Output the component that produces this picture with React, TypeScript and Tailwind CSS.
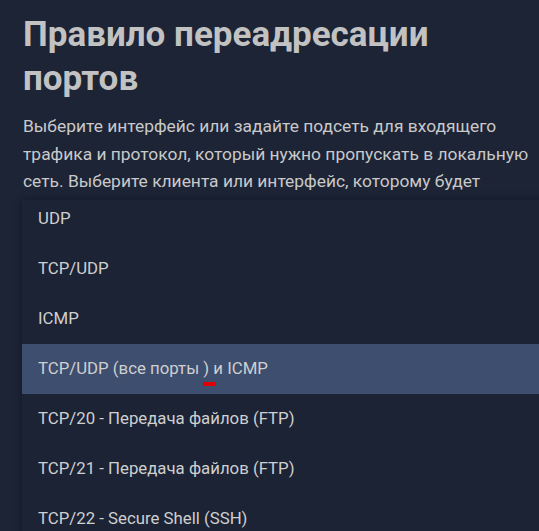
const options = [
    "UDP",
    "TCP/UDP",
    "ICMP",
    "TCP/UDP (все порты ) и ICMP",
    "TCP/20 - Передача файлов (FTP)",
    "TCP/21 - Передача файлов (FTP)",
    "TCP/22 - Secure Shell (SSH)",
    "TCP/23 - Telnet",
];

export default function App() {
    return (
        <div className="relative h-[531px] w-[539px] overflow-hidden bg-[#1c2436] font-['Roboto',sans-serif]">
            <div className="pl-[23px] pr-[4px] pt-[13px]">
                <h1 className="text-[35px] font-bold leading-[44px] text-[#c2c2c2]">
                    Правило переадресации портов
                </h1>
                <p className="mt-[12px] text-[17.4px] leading-[27.5px] text-[#c9c9c9]">
                    Выберите интерфейс или задайте подсеть для входящего
                    трафика и протокол, который нужно пропускать в локальную
                    сеть. Выберите клиента или интерфейс, которому будет
                    перенаправлен входящий трафик, и укажите порты.
                </p>
            </div>
            {/* dropdown menu */}
            <div className="absolute left-[22px] top-[200px] h-[340px] w-[560px] overflow-hidden bg-[#1b2335] shadow-[0_0_8px_rgba(0,0,0,0.35)]">
                <ul className="-mt-[6px]">
                    {options.map((opt, i) => (
                        <li
                            key={opt}
                            className={
                                "relative flex h-[50px] items-center pl-4 text-[16.8px] text-[#cfcfcf] " +
                                (i === 3 ? "bg-[#3d4e6f]" : "")
                            }
                        >
                            {opt}
                            {i === 3 && (
                                <span className="absolute left-[181px] top-[38px] h-[4px] w-[13px] bg-[#e00000]" />
                            )}
                        </li>
                    ))}
                </ul>
            </div>
        </div>
    );
}
